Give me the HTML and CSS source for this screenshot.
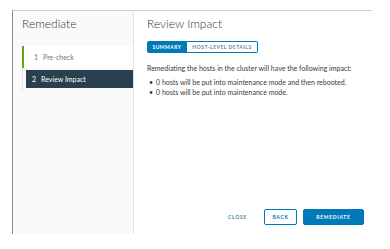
FILE: index.html
```html
<!DOCTYPE html>
<html lang="en">

<head>
    <meta charset="UTF-8">
    <title>Remediate</title>
    <meta name="viewport" content="width=device-width, initial-scale=1">
    <link rel="stylesheet" href="styles.css">
</head>

<body>
    <div id="wizard">
        <div id="sidebar">
            <h2 class="wizard-title">Remediate</h2>
            <ul id="step-nav">
                <li class="step done"><span class="step-num">1</span>Pre-check</li>
                <li class="step current"><span class="step-num">2</span>Review Impact</li>
            </ul>
        </div>
        <div id="content">
            <h3 class="page-title">Review Impact</h3>
            <div class="btn-group">
                <button class="tab active">Summary</button>
                <button class="tab">Host-level details</button>
            </div>
            <p class="intro">Remediating the hosts in the cluster will have the following impact:</p>
            <ul class="impact-list">
                <li>0 hosts will be put into maintenance mode and then rebooted.</li>
                <li>0 hosts will be put into maintenance mode.</li>
            </ul>
            <div id="footer">
                <button class="btn btn-link">Close</button>
                <button class="btn btn-outline">Back</button>
                <button class="btn btn-primary">Remediate</button>
            </div>
        </div>
    </div>
</body>

</html>
```

FILE: styles.css
```css
* {
    margin: 0;
    padding: 0;
    box-sizing: border-box;
}

body {
    font-family: 'Lato', 'Noto Sans', sans-serif;
    background-color: #FFFFFF;
    color: #333333;
    padding: 10px 0 0 12px;
}

#wizard {
    width: 360px;
    height: 224px;
    display: flex;
    flex-direction: row;
}

#sidebar {
    width: 122px;
    background-color: #FAFAFA;
    border-top: 1px solid #CCCCCC;
    border-left: 1px solid #8C8C8C;
    border-right: 1px solid #E4E4E4;
    padding: 5px 0 0 9px;
}

.wizard-title {
    font-size: 12px;
    font-weight: 300;
    line-height: 16px;
    color: #333333;
    margin-bottom: 14px;
}

#step-nav {
    list-style: none;
    border-left: 1px solid #E8E8E8;
    padding-bottom: 3px;
}

.step {
    display: flex;
    align-items: center;
    font-size: 7px;
    height: 19px;
    padding-left: 10px;
}

.step-num {
    margin-right: 5px;
}

.step.done {
    height: 22px;
    background-color: #FFFFFF;
    color: #777777;
    border-left: 2px solid #62A420;
    margin-left: -1px;
    margin-bottom: 2px;
}

.step.current {
    height: 18px;
    background-color: #29414E;
    color: #FFFFFF;
    margin-left: 3px;
    padding-left: 6px;
}

#content {
    flex-grow: 1;
    display: flex;
    flex-direction: column;
    border-top: 1px solid #CCCCCC;
    padding: 5px 8px 9px 13px;
}

.page-title {
    font-size: 12px;
    font-weight: 300;
    line-height: 16px;
    color: #333333;
    margin-bottom: 9px;
}

.btn-group {
    display: flex;
    flex-direction: row;
    margin-bottom: 10px;
}

.tab {
    height: 12px;
    font-family: inherit;
    font-size: 5px;
    font-weight: 700;
    letter-spacing: 0.5px;
    text-transform: uppercase;
    background-color: #FFFFFF;
    color: #6E8593;
    border: 1px solid #0079B8;
    border-left: none;
}

.tab:first-child {
    border-left: 1px solid #0079B8;
    border-radius: 2px 0 0 2px;
}

.tab:last-child {
    border-radius: 0 2px 2px 0;
}

.tab.active {
    width: 40px;
    background-color: #0079B8;
    color: #FFFFFF;
}

.tab:not(.active) {
    width: 71px;
}

.intro {
    font-size: 7px;
    line-height: 11px;
    margin-bottom: 3px;
    color: #3A3A3A;
}

.impact-list {
    list-style: none;
    font-size: 7px;
    line-height: 10px;
    color: #3A3A3A;
}

.impact-list li::before {
    content: '\2022';
    margin: 0 3px 0 2px;
}

#footer {
    margin-top: auto;
    display: flex;
    flex-direction: row;
    justify-content: flex-end;
    align-items: center;
}

.btn {
    height: 16px;
    font-family: inherit;
    font-size: 5px;
    font-weight: 700;
    letter-spacing: 0.7px;
    text-transform: uppercase;
    border-radius: 2px;
    border: 1px solid #0079B8;
}

.btn-link {
    border: none;
    background: none;
    color: #4A7FA8;
    margin-right: 17px;
}

.btn-outline {
    width: 33px;
    background-color: #FFFFFF;
    color: #0079B8;
    margin-right: 6px;
}

.btn-primary {
    width: 61px;
    background-color: #0079B8;
    color: #FFFFFF;
}
```
